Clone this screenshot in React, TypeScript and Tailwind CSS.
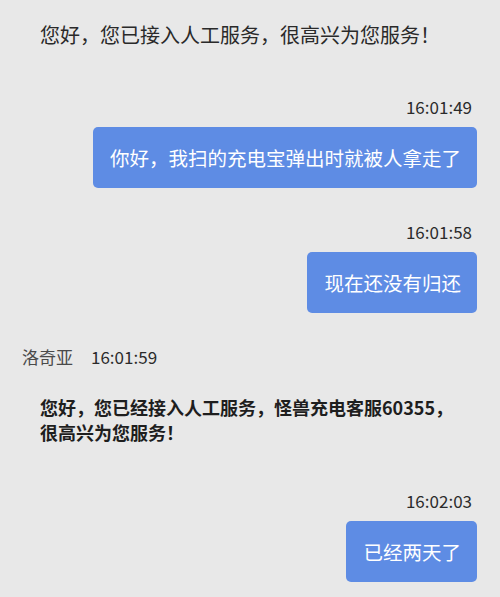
const font = { fontFamily: '"Noto Sans CJK SC", "Noto Sans", sans-serif' };

function Time({ children }: { children: string }) {
  return (
    <div className="flex justify-end pr-[28px] text-[17px] leading-[20px] text-[#2b2b2b]">
      {children}
    </div>
  );
}

function Bubble({ children }: { children: string }) {
  return (
    <div className="flex justify-end pr-[23px] mt-[10px]">
      <div className="bg-[#5e8ce4] text-white rounded-[5px] pl-[17px] pr-[16px] py-[17px] text-[19.5px] leading-[27px]">
        {children}
      </div>
    </div>
  );
}

export default function App() {
  return (
    <div className="w-[500px] h-[597px] bg-[#e8e8e8] overflow-hidden" style={font}>
      <div className="pt-[21px] pl-[40px] text-[20px] leading-[28px] text-[#2a2a2a]">
        您好，您已接入人工服务，很高兴为您服务！
      </div>

      <div className="mt-[48px]">
        <Time>16:01:49</Time>
        <Bubble>你好，我扫的充电宝弹出时就被人拿走了</Bubble>
      </div>

      <div className="mt-[34px]">
        <Time>16:01:58</Time>
        <Bubble>现在还没有归还</Bubble>
      </div>

      <div className="mt-[34px] pl-[22px] flex items-center gap-[18px] text-[17px] leading-[20px]">
        <span className="text-[#4a4a4a]">洛奇亚</span>
        <span className="text-[#2b2b2b]">16:01:59</span>
      </div>

      <div className="mt-[28px] pl-[40px] text-[18px] leading-[25px] font-bold text-[#1e1e1e]">
        您好，您已经接入人工服务，怪兽充电客服60355，
        <br />
        很高兴为您服务！
      </div>

      <div className="mt-[46px]">
        <Time>16:02:03</Time>
        <Bubble>已经两天了</Bubble>
      </div>
    </div>
  );
}
